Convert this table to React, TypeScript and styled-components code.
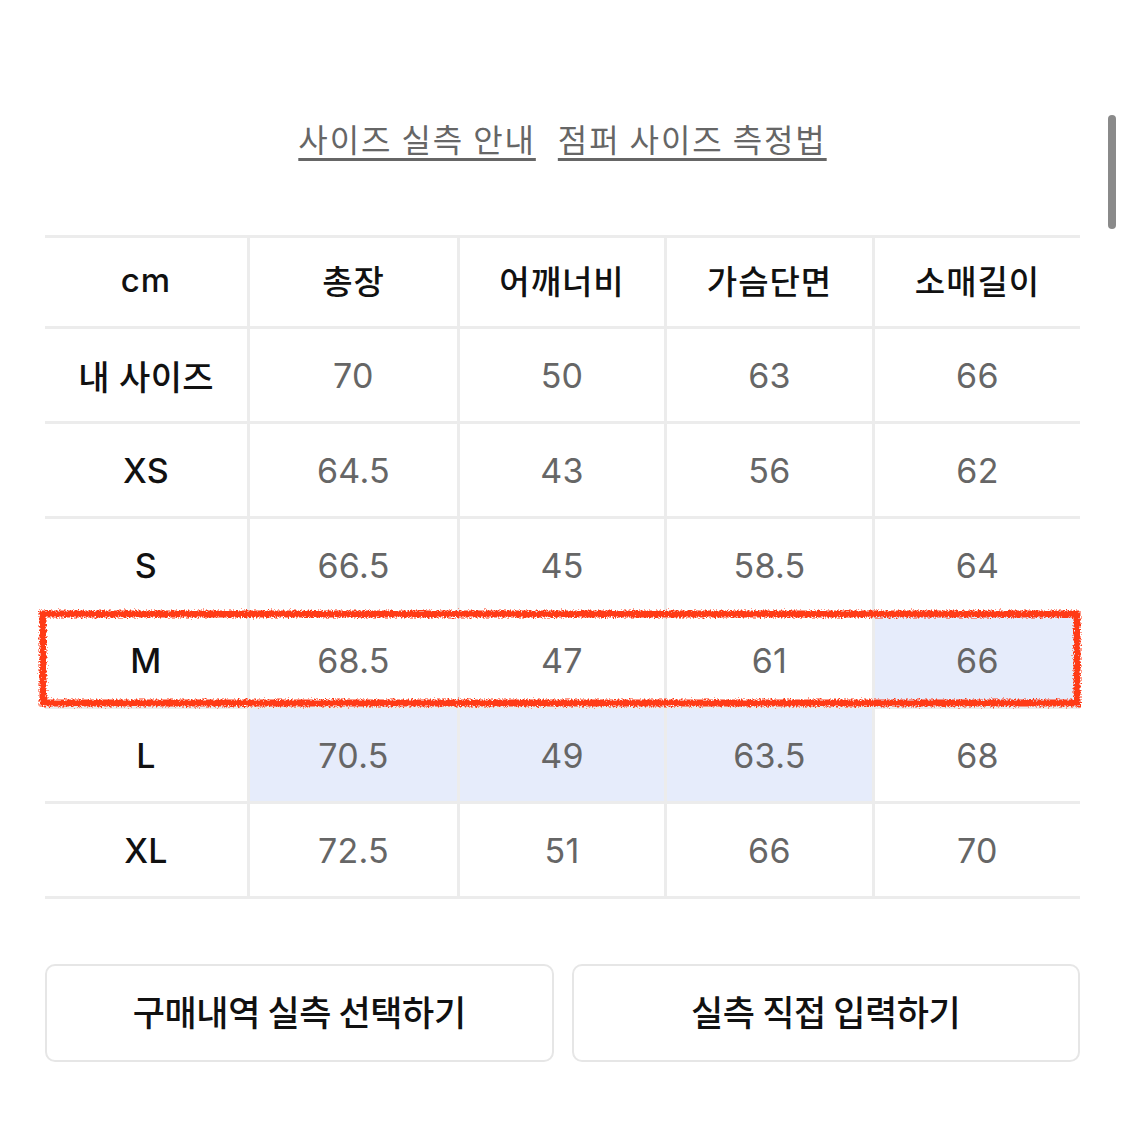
import React from "react";
import styled, { createGlobalStyle, css } from "styled-components";

const Global = createGlobalStyle`
  html, body { margin: 0; padding: 0; background: #ffffff; }
  body { font-family: Inter, "Noto Sans CJK KR", sans-serif; }
`;

const Page = styled.div`
  position: relative;
  width: 1125px;
  height: 1125px;
  box-sizing: border-box;
  padding: 0 45px;
  overflow: hidden;
`;

const LinkBar = styled.div`
  height: 235px;
  display: flex;
  justify-content: center;
  align-items: flex-start;
  gap: 22px;
  padding-top: 116px;
  box-sizing: border-box;
`;

const GuideLink = styled.a`
  font-family: "Noto Sans CJK KR", sans-serif;
  font-size: 32px;
  font-weight: 400;
  letter-spacing: 1.9px;
  line-height: 44px;
  color: #666666;
  text-decoration: underline;
  text-decoration-thickness: 3px;
  text-underline-offset: 6px;
  cursor: pointer;
`;

const TableWrap = styled.div`
  position: relative;
`;

const Grid = styled.div`
  display: grid;
  grid-template-columns: 202px 210px 207px 208px 208px;
  border-top: 3px solid #ececec;
`;

const Cell = styled.div<{ $first?: boolean; $head?: boolean; $hl?: boolean }>`
  height: ${(p) => (p.$head ? "91px" : "95px")};
  box-sizing: border-box;
  padding-bottom: ${(p) => (p.$head ? "4px" : "0")};
  display: flex;
  align-items: center;
  justify-content: center;
  border-bottom: 3px solid #ececec;
  ${(p) => !p.$first && css`border-left: 3px solid #ececec;`}
  background: ${(p) => (p.$hl ? "#e6ecfb" : "#ffffff")};
  font-family: Inter, "Noto Sans CJK KR", sans-serif;
  font-size: ${(p) => (p.$head ? "33px" : "34px")};
  font-weight: ${(p) => (p.$first || p.$head ? 500 : 400)};
  color: ${(p) => (p.$first || p.$head ? "#111111" : "#666666")};
  letter-spacing: ${(p) => (p.$head ? "1px" : "0.3px")};
`;

const Highlight = styled.svg`
  position: absolute;
  left: -7px;
  top: 375px;
  width: 1044px;
  height: 98px;
  pointer-events: none;
  overflow: visible;
`;

const Buttons = styled.div`
  display: grid;
  grid-template-columns: 1fr 1fr;
  gap: 18px;
  margin-top: 65px;
`;

const Button = styled.button`
  height: 98px;
  box-sizing: border-box;
  padding: 0 0 5px;
  border: 2px solid #e6e6e6;
  border-radius: 10px;
  background: #ffffff;
  font-family: "Noto Sans CJK KR", sans-serif;
  font-size: 35px;
  font-weight: 500;
  letter-spacing: -0.4px;
  color: #111111;
  cursor: pointer;
`;

const Scrollbar = styled.div`
  position: absolute;
  left: 1108px;
  top: 115px;
  width: 8px;
  height: 114px;
  border-radius: 4px;
  background: #8a8a8a;
`;

const headers = ["cm", "총장", "어깨너비", "가슴단면", "소매길이"];
const rows: { label: string; values: string[]; hl?: number[] }[] = [
  { label: "내 사이즈", values: ["70", "50", "63", "66"] },
  { label: "XS", values: ["64.5", "43", "56", "62"] },
  { label: "S", values: ["66.5", "45", "58.5", "64"] },
  { label: "M", values: ["68.5", "47", "61", "66"], hl: [3] },
  { label: "L", values: ["70.5", "49", "63.5", "68"], hl: [0, 1, 2] },
  { label: "XL", values: ["72.5", "51", "66", "70"] },
];

export default function App() {
  return (
    <>
      <Global />
      <Page>
        <LinkBar>
          <GuideLink>사이즈 실측 안내</GuideLink>
          <GuideLink>점퍼 사이즈 측정법</GuideLink>
        </LinkBar>
        <TableWrap>
          <Grid>
            {headers.map((h, i) => (
              <Cell key={h} $head $first={i === 0}>
                {h}
              </Cell>
            ))}
            {rows.map((r) => (
              <React.Fragment key={r.label}>
                <Cell $first>{r.label}</Cell>
                {r.values.map((v, i) => (
                  <Cell key={i} $hl={r.hl?.includes(i)}>
                    {v}
                  </Cell>
                ))}
              </React.Fragment>
            ))}
          </Grid>
          <Highlight viewBox="0 0 1044 98">
            <defs>
              <filter id="rough" x="-5%" y="-20%" width="110%" height="140%">
                <feTurbulence type="fractalNoise" baseFrequency="0.6" numOctaves="2" seed="3" />
                <feDisplacementMap in="SourceGraphic" scale="6" />
              </filter>
            </defs>
            <rect
              x="5"
              y="4"
              width="1034"
              height="89"
              fill="none"
              stroke="#ff3a12"
              strokeWidth="7"
              filter="url(#rough)"
            />
          </Highlight>
        </TableWrap>
        <Buttons>
          <Button>구매내역 실측 선택하기</Button>
          <Button>실측 직접 입력하기</Button>
        </Buttons>
        <Scrollbar />
      </Page>
    </>
  );
}
